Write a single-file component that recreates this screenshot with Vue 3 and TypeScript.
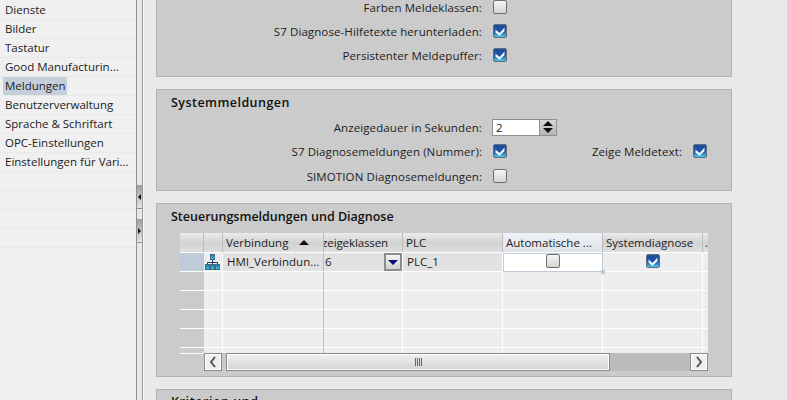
<script setup lang="ts">
const navItems = [
  'Dienste', 'Bilder', 'Tastatur', 'Good Manufacturin...', 'Meldungen',
  'Benutzerverwaltung', 'Sprache & Schriftart', 'OPC-Einstellungen',
  'Einstellungen für Vari...', '', '', '', '',
]
const emptyRows = [0, 1, 2, 3]
</script>

<template>
  <div class="page">
    <aside class="nav">
      <div v-for="(item, i) in navItems" :key="i" class="nav-row">
        <span :class="{ sel: item === 'Meldungen' }">{{ item }}</span>
      </div>
    </aside>

    <div class="splitter">
      <button class="split-btn"><i class="tri left"></i></button>
      <button class="split-btn"><i class="tri right"></i></button>
    </div>

    <main class="main">
      <section class="panel p1">
        <div class="field"><label>Farben Meldeklassen:</label><span class="cb"></span></div>
        <div class="field"><label>S7 Diagnose-Hilfetexte herunterladen:</label><span class="cb on"><svg viewBox="0 0 12 12"><path d="M1.5 4.5L5.5 8 10.5 2.5V6L5.5 11 1.5 7.5z" fill="#e6f6ff"/></svg></span></div>
        <div class="field"><label>Persistenter Meldepuffer:</label><span class="cb on"><svg viewBox="0 0 12 12"><path d="M1.5 4.5L5.5 8 10.5 2.5V6L5.5 11 1.5 7.5z" fill="#e6f6ff"/></svg></span></div>
      </section>

      <section class="panel p2">
        <h2>Systemmeldungen</h2>
        <div class="field"><label>Anzeigedauer in Sekunden:</label>
          <div class="spin"><span class="spin-val">2</span><span class="spin-btns"><i class="tri up"></i><i class="tri down"></i></span></div>
        </div>
        <div class="field">
          <label>S7 Diagnosemeldungen (Nummer):</label><span class="cb on"><svg viewBox="0 0 12 12"><path d="M1.5 4.5L5.5 8 10.5 2.5V6L5.5 11 1.5 7.5z" fill="#e6f6ff"/></svg></span>
          <label class="second">Zeige Meldetext:</label><span class="cb on"><svg viewBox="0 0 12 12"><path d="M1.5 4.5L5.5 8 10.5 2.5V6L5.5 11 1.5 7.5z" fill="#e6f6ff"/></svg></span>
        </div>
        <div class="field last"><label>SIMOTION Diagnosemeldungen:</label><span class="cb"></span></div>
      </section>

      <section class="panel p3">
        <h2>Steuerungsmeldungen und Diagnose</h2>
        <div class="table">
          <div class="row head">
            <div class="c c0"></div>
            <div class="c c1"></div>
            <div class="c c2">Verbindung<i class="tri up sort"></i></div>
            <div class="c c3"><span class="shifted">zeigeklassen</span></div>
            <div class="c c4">PLC</div>
            <div class="c c5">Automatische ...</div>
            <div class="c c6">Systemdiagnose</div>
            <div class="c c7">.</div>
          </div>
          <div class="row data">
            <div class="c c0 rowhead"></div>
            <div class="c c1 iconcell">
              <svg width="15" height="16" viewBox="0 0 15 16">
                <defs>
                  <linearGradient id="box" x1="0" y1="0" x2="0" y2="1">
                    <stop offset="0" stop-color="#2a6ea8" />
                    <stop offset="1" stop-color="#2fd6e8" />
                  </linearGradient>
                </defs>
                <path d="M7.5 5v5M2.5 10.5V8.5h10v2" stroke="#1d3c5c" fill="none"/>
                <rect x="5.5" y="0.5" width="4" height="5" fill="url(#box)" stroke="#3f6a86"/>
                <rect x="0.5" y="10.5" width="4" height="5" fill="url(#box)" stroke="#3f6a86"/>
                <rect x="5.5" y="10.5" width="4" height="5" fill="url(#box)" stroke="#3f6a86"/>
                <rect x="10.5" y="10.5" width="4" height="5" fill="url(#box)" stroke="#3f6a86"/>
              </svg>
            </div>
            <div class="c c2 grey">HMI_Verbindun...</div>
            <div class="c c3 val"><span>6</span><span class="drop"><i class="tri down navy"></i></span></div>
            <div class="c c4 grey">PLC_1</div>
            <div class="c c5 focus"><span class="cb"></span><i class="handle"></i></div>
            <div class="c c6 center"><span class="cb on"><svg viewBox="0 0 12 12"><path d="M1.5 4.5L5.5 8 10.5 2.5V6L5.5 11 1.5 7.5z" fill="#e6f6ff"/></svg></span></div>
            <div class="c c7"></div>
          </div>
          <div v-for="r in emptyRows" :key="r" class="row">
            <div class="c c0 rowhead"></div><div class="c c1"></div><div class="c c2"></div><div class="c c3"></div>
            <div class="c c4"></div><div class="c c5"></div><div class="c c6"></div><div class="c c7"></div>
          </div>
          <div class="row tail">
            <div class="c c0 rowhead"></div><div class="c c1"></div><div class="c c2"></div><div class="c c3"></div>
            <div class="c c4"></div><div class="c c5"></div><div class="c c6"></div><div class="c c7"></div>
          </div>
          <div class="scrollbar">
            <div class="sb-spacer"></div>
            <button class="sb-btn"><svg width="8" height="12" viewBox="0 0 8 12"><path d="M6 1L2 6l4 5" fill="none" stroke="#555" stroke-width="2"/></svg></button>
            <div class="sb-track">
              <div class="sb-thumb"><span class="grip"></span></div>
            </div>
            <button class="sb-btn"><svg width="8" height="12" viewBox="0 0 8 12"><path d="M2 1l4 5-4 5" fill="none" stroke="#555" stroke-width="2"/></svg></button>
          </div>
        </div>
      </section>

      <section class="panel p4">
        <h2>Kriterien und</h2>
      </section>
    </main>
  </div>
</template>

<style>
html, body { margin: 0; overflow: hidden; }
</style>

<style scoped>
.page {
  display: flex;
  width: 787px;
  height: 400px;
  overflow: hidden;
  background: #e9e9e9;
  font-family: "Open Sans", sans-serif;
  font-size: 11.5px;
  color: #1c1c1c;
}
.nav {
  width: 136px;
  flex: none;
  background: #f0f0f0;
  padding-top: 1px;
  box-sizing: border-box;
}
.nav-row {
  height: 19px;
  box-sizing: border-box;
  border-bottom: 1px solid #e9e9e9;
  padding-left: 3px;
  line-height: 18px;
  white-space: nowrap;
}
.nav-row span { display: inline-block; padding: 0 2px; height: 18px; }
.nav-row span.sel { background: #c5cfdb; width: 60px; }
.splitter {
  width: 8px;
  flex: none;
  box-sizing: border-box;
  border-left: 1px solid #8f8f8f;
  border-right: 1px solid #f8f8f8;
  box-shadow: inset -1px 0 0 #9c9c9c;
  background: #e8e8e8;
  display: flex;
  flex-direction: column;
  gap: 10px;
  padding-top: 185px;
}
.split-btn {
  display: block;
  width: 5px;
  height: 24px;
  padding: 0;
  border: 0;
  border-bottom: 1px solid #8f8f8f;
  background: linear-gradient(#9e9e9e, #e6e6e6);
  position: relative;
}
.tri { display: block; width: 0; height: 0; border-style: solid; border-color: transparent; }
.tri.left { border-width: 3px 3px 3px 0; border-right-color: #111; position: absolute; left: 1px; top: 9px; }
.tri.right { border-width: 3px 0 3px 3px; border-left-color: #111; position: absolute; left: 1px; top: 9px; }
.tri.up { border-width: 0 5px 5px; border-bottom-color: #111; }
.tri.down { border-width: 5px 5px 0; border-top-color: #111; }
.tri.navy { border-top-color: #0a0a80; }
.main {
  flex: 1;
  padding: 0 55px 0 12px;
  display: flex;
  flex-direction: column;
  gap: 12px;
  min-width: 0;
}
.panel {
  flex: none;
  box-sizing: border-box;
  background: #cbcbcb;
  border: 1px solid #b2b2b2;
}
.p1 { height: 77px; border-top: 0; }
.p1 .field:first-child { margin-top: -5px; }
.p2 { height: 102px; padding-top: 4px; }
.p3 { height: 174px; position: relative; }
.p4 { height: 40px; padding-top: 3px; }
.panel h2 {
  margin: 0;
  padding-left: 14px;
  font-size: 12.5px;
  font-weight: 600;
  line-height: 18px;
  color: #111;
}
.p2 h2 { margin-bottom: 3px; letter-spacing: 0.45px; }
.p3 h2 { padding-top: 4px; }
.p4 h2 { letter-spacing: 0.6px; }
.field {
  display: flex;
  align-items: center;
  height: 24px;
  letter-spacing: 0.1px;
}
.field.last { margin-top: 1px; }
.field label {
  width: 325px;
  text-align: right;
  flex: none;
  margin-right: 11px;
  white-space: nowrap;
}
.field label.second { width: 175px; }
.cb {
  display: inline-block;
  box-sizing: border-box;
  width: 14px;
  height: 14px;
  border: 1px solid #6f6f6f;
  border-radius: 2px;
  background: linear-gradient(#f6f6f6, #d4d4d4);
  flex: none;
}
.cb.on {
  border-color: #5f6e7c;
  background: linear-gradient(#1f4f9f 0 50%, #48c4ee);
}
.cb svg { display: block; width: 12px; height: 12px; }
.spin {
  display: flex;
  width: 65px;
  height: 17px;
  box-sizing: border-box;
  background: #fff;
  border: 1px solid #8f8f8f;
  margin-left: -1px;
}
.spin-val { flex: 1; padding-left: 3px; line-height: 15px; }
.spin-btns {
  width: 16px;
  background: linear-gradient(#d8d8d8, #b4b4b4);
  border-left: 1px solid #8f8f8f;
  display: flex;
  flex-direction: column;
  align-items: center;
  justify-content: center;
  gap: 2px;
}
.table {
  position: absolute;
  left: 23px;
  top: 29px;
  width: 528px;
  height: 138px;
  overflow: hidden;
}
.row { display: flex; height: 19px; box-sizing: border-box; }
.row.head { height: 20px; }
.row.tail { height: 6px; }
.c {
  flex: none;
  box-sizing: border-box;
  height: 100%;
  background: #eee;
  border-right: 1px solid #fff;
  border-bottom: 1px solid #fff;
  line-height: 18px;
  white-space: nowrap;
  overflow: hidden;
  padding-left: 3px;
}
.c0 { width: 24px; padding: 0; }
.c1 { width: 19px; padding: 0; }
.c2 { width: 101px; border-right-color: #bcbcbc; }
.c3 { width: 79px; position: relative; padding-left: 1px; }
.c4 { width: 100px; }
.c5 { width: 100px; }
.c6 { width: 100px; }
.c7 { width: 5px; border-right: 0; padding-left: 2px; }
.head .c {
  background: linear-gradient(#ececec, #d2d2d2 50%, #dedede);
  border-right: 1px solid #bdbdbd;
  border-bottom: 1px solid #fff;
  line-height: 19px;
  color: #222;
}
.head .c2 { padding-left: 3px; display: flex; align-items: center; }
.sort { margin-left: 11px; }
.shifted { display: block; margin-left: -3px; letter-spacing: -0.1px; }
.head .c5 { background: linear-gradient(#eef1f5, #dfe3ea); }
.head .c7 { border-right: 0; }
.rowhead { background: transparent; border-right: 0; }
.data .rowhead { background: #bfcbd8; }
.iconcell { display: flex; align-items: center; padding-left: 1px; }
.grey { background: #e2e2e2; padding-left: 4px; }
.val { display: flex; align-items: center; background: #e2e2e2; }
.drop {
  position: absolute;
  right: 0;
  top: 0;
  width: 18px;
  height: 18px;
  box-sizing: border-box;
  border: 2px solid #8c8c8c;
  background: linear-gradient(#f4f4f4, #cfcfcf);
  display: flex;
  align-items: center;
  justify-content: center;
}
.focus {
  background: #fff;
  border: 1px solid #c0cad6;
  display: flex;
  align-items: flex-start;
  justify-content: center;
  position: relative;
  overflow: visible;
  padding: 0;
}
.handle {
  position: absolute;
  right: -3px;
  bottom: -3px;
  width: 4px;
  height: 4px;
  background: #bcc8d6;
}
.center { display: flex; align-items: flex-start; justify-content: center; padding: 1px 0 0; }
.scrollbar {
  position: absolute;
  left: 0;
  right: 0;
  bottom: 0;
  height: 18px;
  display: flex;
}
.sb-spacer { width: 24px; flex: none; }
.sb-btn {
  width: 18px;
  height: 18px;
  box-sizing: border-box;
  padding: 0;
  border: 1px solid #8a8a8a;
  box-shadow: inset 0 0 0 1px #fff;
  background: #eee;
  display: flex;
  align-items: center;
  justify-content: center;
  flex: none;
}
.sb-track {
  flex: 1;
  padding-left: 4px;
  background: linear-gradient(90deg, #cbcbcb 4px, #bcbcbc 4px);
}
.sb-thumb {
  width: 384px;
  height: 18px;
  box-sizing: border-box;
  border: 1px solid #8a8a8a;
  box-shadow: inset 0 0 0 1px #fff;
  background: linear-gradient(#f1f1f1, #d2d2d2);
  display: flex;
  align-items: center;
  justify-content: center;
}
.grip {
  width: 7px;
  height: 8px;
  background: repeating-linear-gradient(90deg, #666 0 1px, transparent 1px 2px);
}
</style>
